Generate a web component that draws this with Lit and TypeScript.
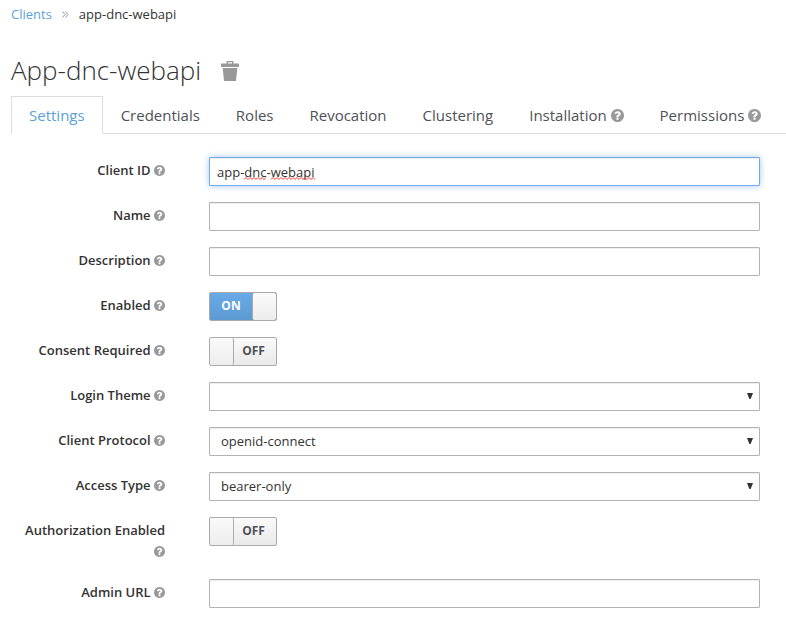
import { LitElement, html, css, svg, nothing } from "lit";
import { customElement, property } from "lit/decorators.js";

const QUESTION =
  "M1024 1376v-192q0-14-9-23t-23-9h-192q-14 0-23 9t-9 23v192q0 14 9 23t23 9h192q14 0 23-9t9-23zm256-672q0-88-55.5-163t-138.5-116-170-41q-243 0-371 213-15 24 8 42l132 100q7 6 19 6 16 0 25-12 53-68 86-92 34-24 86-24 48 0 85.5 26t37.5 59q0 38-20 61t-68 45q-63 28-115.5 86.5t-52.5 125.5v36q0 14 9 23t23 9h192q14 0 23-9t9-23q0-19 21.5-49.5t54.5-49.5q32-18 49-28.5t46-35 44.5-48 28-60.5 12.5-81zm384 192q0 209-103 385.5t-279.5 279.5-385.5 103-385.5-103-279.5-279.5-103-385.5 103-385.5 279.5-279.5 385.5-103 385.5 103 279.5 279.5 103 385.5z";

@customElement("help-icon")
class HelpIcon extends LitElement {
  static styles = css`
    :host { display: inline-block; width: 11px; height: 11px; color: #999; vertical-align: -1px; }
    :host([large]) { width: 13px; height: 13px; vertical-align: -1px; }
    .glyph { display: block; width: 100%; height: 100%; fill: currentColor; }
  `;
  render() {
    return html`<svg class="glyph" viewBox="128 128 1536 1536" aria-hidden="true"><path d=${QUESTION}></path></svg>`;
  }
}

@customElement("toggle-switch")
class ToggleSwitch extends LitElement {
  @property({ type: Boolean }) on = false;
  @property() label = "";

  static styles = css`
    :host { display: block; }
    .switch {
      position: relative; display: flex; box-sizing: border-box; width: 68px; height: 29px;
      border: 1px solid #aaa; border-radius: 2px; overflow: hidden; cursor: pointer;
      font: 700 12px/25px "Open Sans", sans-serif; text-align: center;
      background: linear-gradient(#fafafa, #e9e9e9); color: #4d5258;
    }
    .switch.on { background: linear-gradient(#68a9e8, #5c9bd1); color: #fff; }
    .box { position: absolute; inset: 0; margin: 0; opacity: 0; cursor: pointer; }
    .text { flex: 1; padding-right: 3px; }
    .on .text { padding-right: 0; }
    .handle { width: 23px; background: linear-gradient(#fafafa, #ededed); border-right: 1px solid #aaa; border-radius: 2px; }
    .on .handle { order: 1; border-right: 0; border-left: 1px solid #aaa; }
  `;
  render() {
    return html`<label class="switch ${this.on ? "on" : ""}">
      <input class="box" type="checkbox" role="switch" aria-label=${this.label} .checked=${this.on}
        @change=${(e: Event) => (this.on = (e.target as HTMLInputElement).checked)} />
      <span class="handle"></span><span class="text">${this.on ? "ON" : "OFF"}</span>
    </label>`;
  }
}

interface Field {
  id: string;
  label: string;
  kind: "text" | "select" | "switch";
  value?: string;
  on?: boolean;
  active?: boolean;
}

const FIELDS: Field[] = [
  { id: "clientId", label: "Client ID", kind: "text", value: "app-dnc-webapi", active: true },
  { id: "name", label: "Name", kind: "text" },
  { id: "description", label: "Description", kind: "text" },
  { id: "enabled", label: "Enabled", kind: "switch", on: true },
  { id: "consent", label: "Consent Required", kind: "switch" },
  { id: "theme", label: "Login Theme", kind: "select", value: "" },
  { id: "protocol", label: "Client Protocol", kind: "select", value: "openid-connect" },
  { id: "access", label: "Access Type", kind: "select", value: "bearer-only" },
  { id: "authorization", label: "Authorization Enabled", kind: "switch" },
  { id: "adminUrl", label: "Admin URL", kind: "text" },
];

const TABS = [
  { label: "Settings", active: true },
  { label: "Credentials" },
  { label: "Roles" },
  { label: "Revocation" },
  { label: "Clustering" },
  { label: "Installation", help: true },
  { label: "Permissions", help: true },
];

// Zigzag spelling mark running from one x to another.
const squiggle = (from: number, to: number) => {
  let d = `M${from} 2.5`;
  for (let x = from + 2, up = true; x <= to; x += 2, up = !up) d += `L${x} ${up ? 0.5 : 2.5}`;
  return svg`<path d=${d}></path>`;
};

@customElement("app-root")
class AppRoot extends LitElement {
  static styles = css`
    :host {
      display: block; padding-left: 11px; background: #fff; color: #333;
      font: 13px/21px "Open Sans", sans-serif;
    }
    .crumbs { display: flex; align-items: center; gap: 10px; padding-top: 4px; }
    .crumbs a { color: #5a9fd8; text-decoration: none; }
    .sep { width: 7px; height: 7px; fill: none; stroke: #999; }
    .heading { display: flex; align-items: center; gap: 20px; margin-top: 25px; height: 40px; }
    h1 { margin: 0; font-size: 26px; line-height: 40px; font-weight: 300; }
    .remove { display: block; padding: 2px 0 0; border: 0; background: none; cursor: pointer; }
    .trash { display: block; width: 18px; height: 20px; fill: #999; }
    .tabs { display: flex; margin-top: 6px; border-bottom: 1px solid #ddd; white-space: nowrap; }
    .tab {
      padding: 8px 17px; margin-bottom: -1px; border: 1px solid transparent; color: #4d5258;
      font-size: 15px; line-height: 20px; text-decoration: none;
    }
    .tab.active { color: #5a9fd8; border-color: #ddd; border-bottom-color: #fff; }
    .form { display: grid; gap: 16px; padding: 23px 26px 21px 0; }
    .row { display: grid; grid-template-columns: 154px minmax(0, 1fr); column-gap: 44px; }
    .label { padding: 3px 0 1px; text-align: right; font-weight: 600; }
    .field { position: relative; }
    .control {
      display: block; box-sizing: border-box; width: 100%; height: 29px; margin: 0; padding: 0 7px;
      border: 1px solid #b3b3b3; border-radius: 1px; background: #fff; color: #333;
      font: 13px/20px "Open Sans", sans-serif; box-shadow: inset 0 1px 1px rgba(0, 0, 0, 0.075); outline: 0;
    }
    .control.current { border-color: #75abea; box-shadow: inset 0 1px 1px rgba(0, 0, 0, 0.075), 0 0 6px rgba(102, 163, 235, 0.6); }
    select.control { appearance: none; padding: 0 24px 2px 11px; }
    .arrow { position: absolute; right: 7px; top: 11px; width: 6px; height: 6px; fill: #333; pointer-events: none; }
    .spelling { position: absolute; left: 8px; top: 20px; width: 102px; height: 3px; fill: none; stroke: #f03a30; pointer-events: none; }
  `;

  private control(f: Field) {
    if (f.kind === "switch") return html`<toggle-switch id=${f.id} .label=${f.label} .on=${!!f.on}></toggle-switch>`;
    if (f.kind === "select")
      return html`<select class="control" id=${f.id}><option>${f.value}</option></select>
        <svg class="arrow" viewBox="0 0 6 6" aria-hidden="true"><path d="M0 0H6L3.6 6H2.4Z"></path></svg>`;
    return html`<input class="control ${f.active ? "current" : ""}" id=${f.id} type="text" spellcheck="false" .value=${f.value ?? ""} />
      ${f.active
        ? html`<svg class="spelling" viewBox="0 0 102 3" aria-hidden="true">${squiggle(27, 50)}${squiggle(54, 99)}</svg>`
        : nothing}`;
  }

  render() {
    return html`
      <nav class="crumbs" aria-label="Breadcrumb">
        <a href="#clients">Clients</a>
        <svg class="sep" viewBox="0 0 7 7" aria-hidden="true"><path d="M.5 .5L3 3.5L.5 6.5M3.5 .5L6 3.5L3.5 6.5"></path></svg>
        <span>app-dnc-webapi</span>
      </nav>
      <header class="heading">
        <h1>App-dnc-webapi</h1>
        <button class="remove" type="button" aria-label="Delete client">
          <svg class="trash" viewBox="0 0 18 20" aria-hidden="true">
            <path fill-rule="evenodd" d="M5.5 0H12.5V2.5H18V6H0V2.5H5.5ZM7 1.3V2.5H11V1.3Z"></path>
            <path d="M1.7 7H16.3L15 20H3Z"></path>
          </svg>
        </button>
      </header>
      <nav class="tabs" aria-label="Client sections">
        ${TABS.map(
          (t) => html`<a class="tab ${t.active ? "active" : ""}" href="#${t.label.toLowerCase()}">${t.label}${t.help ? html` <help-icon large></help-icon>` : nothing}</a>`
        )}
      </nav>
      <form class="form">
        ${FIELDS.map(
          (f) => html`<div class="row">
            <label class="label" for=${f.id}>${f.label} <help-icon></help-icon></label>
            <div class="field">${this.control(f)}</div>
          </div>`
        )}
      </form>
    `;
  }
}
